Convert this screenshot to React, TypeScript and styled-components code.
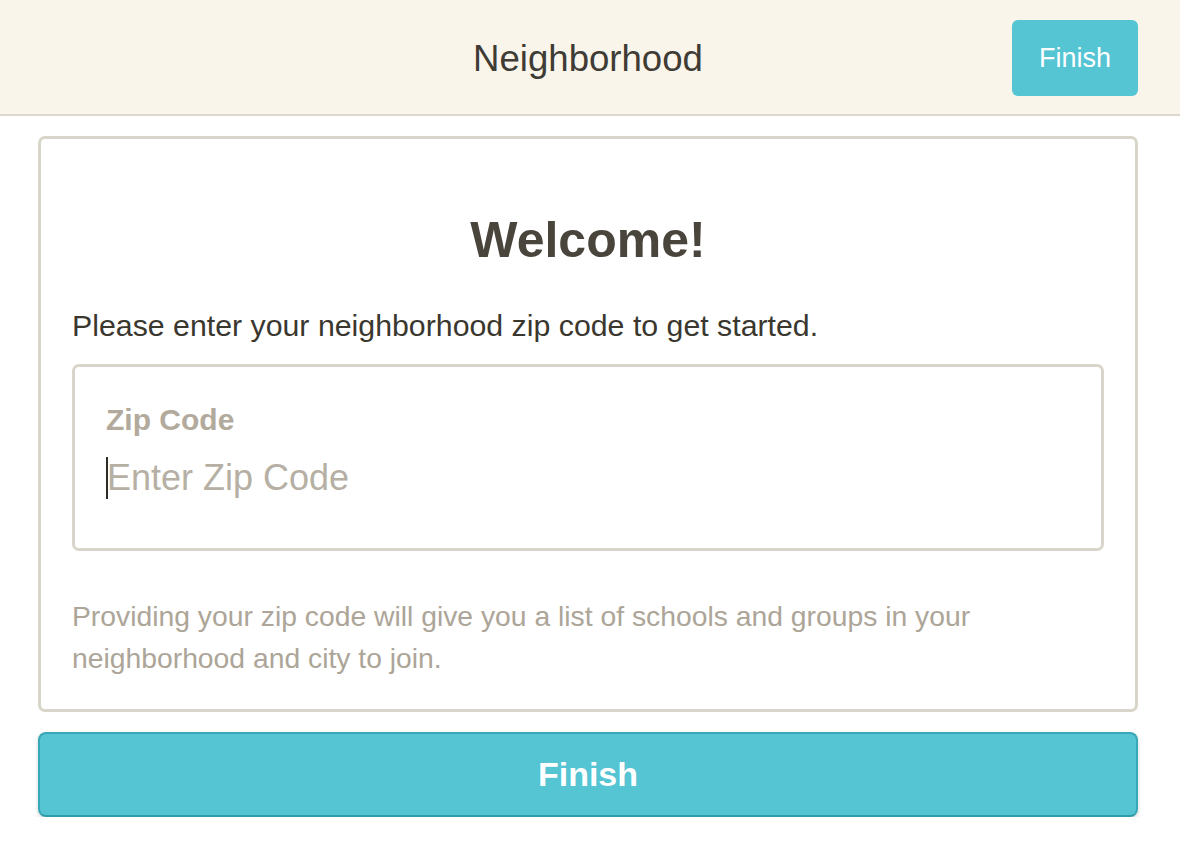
import React from "react";
import styled, { createGlobalStyle } from "styled-components";

const Global = createGlobalStyle`
  html, body { margin: 0; padding: 0; background: #ffffff; }
  body { font-family: "Liberation Sans", Arial, Helvetica, sans-serif; }
  * { box-sizing: border-box; }
`;

const Header = styled.header`
  height: 116px;
  background: #f9f5eb;
  border-bottom: 2px solid #dcd7cc;
  display: grid;
  grid-template-columns: 1fr auto;
  align-items: center;
  padding: 0 42px 0 38px;
`;

const Title = styled.h1`
  margin: 0;
  grid-column: 1 / span 2;
  grid-row: 1;
  justify-self: center;
  font-size: 36.6px;
  font-weight: 400;
  color: #3f3b35;
  transform: translateY(2px);
`;

const HeaderButton = styled.button`
  grid-column: 2;
  grid-row: 1;
  width: 126px;
  height: 76px;
  margin-top: 2px;
  border: none;
  border-radius: 6px;
  background: #55c4d3;
  color: #ffffff;
  font-family: inherit;
  font-size: 27px;
  cursor: pointer;
`;

const Main = styled.main`
  padding: 20px 42px 0 38px;
  display: flex;
  flex-direction: column;
  gap: 20px;
`;

const Card = styled.section`
  border: 3px solid #dad5ca;
  border-radius: 7px;
  padding: 73px 31px 30px;
  display: flex;
  flex-direction: column;
`;

const Welcome = styled.h2`
  margin: 0;
  text-align: center;
  font-size: 50px;
  line-height: 56px;
  font-weight: 700;
  color: #4a453c;
`;

const Intro = styled.p`
  margin: 42px 0 0;
  font-size: 30.3px;
  line-height: 32px;
  color: #3a372f;
`;

const Field = styled.label`
  margin-top: 22px;
  border: 3px solid #dad5ca;
  border-radius: 7px;
  padding: 36px 31px 48px;
  display: flex;
  flex-direction: column;
  gap: 19px;
`;

const FieldLabel = styled.span`
  font-size: 30px;
  line-height: 34px;
  font-weight: 700;
  color: #b2aa9d;
`;

const InputRow = styled.div`
  display: flex;
  align-items: center;
`;

const Caret = styled.span`
  width: 2px;
  height: 42px;
  margin-right: -1px;
  background: #2e2b25;
  flex: none;
`;

const Input = styled.input`
  flex: 1;
  border: none;
  outline: none;
  padding: 0;
  height: 44px;
  font-family: inherit;
  font-size: 36px;
  color: #3a372f;
  caret-color: transparent;
  background: transparent;
  &::placeholder {
    color: #b6afa4;
  }
`;

const Help = styled.p`
  margin: 44px 0 0;
  font-size: 28.3px;
  line-height: 42px;
  color: #aca598;
`;

const FinishButton = styled.button`
  height: 85px;
  border: 2px solid #37a8b8;
  border-bottom-color: #2f9cac;
  border-radius: 8px;
  background: #55c4d3;
  box-shadow: 0 2px 4px rgba(0, 0, 0, 0.18);
  color: #ffffff;
  font-family: inherit;
  font-size: 34px;
  font-weight: 700;
  cursor: pointer;
`;

export default function App() {
  return (
    <>
      <Global />
      <Header>
        <Title>Neighborhood</Title>
        <HeaderButton>Finish</HeaderButton>
      </Header>
      <Main>
        <Card>
          <Welcome>Welcome!</Welcome>
          <Intro>Please enter your neighborhood zip code to get started.</Intro>
          <Field>
            <FieldLabel>Zip Code</FieldLabel>
            <InputRow>
              <Caret />
              <Input placeholder="Enter Zip Code" />
            </InputRow>
          </Field>
          <Help>
            Providing your zip code will give you a list of schools and groups in your
            neighborhood and city to join.
          </Help>
        </Card>
        <FinishButton>Finish</FinishButton>
      </Main>
    </>
  );
}
